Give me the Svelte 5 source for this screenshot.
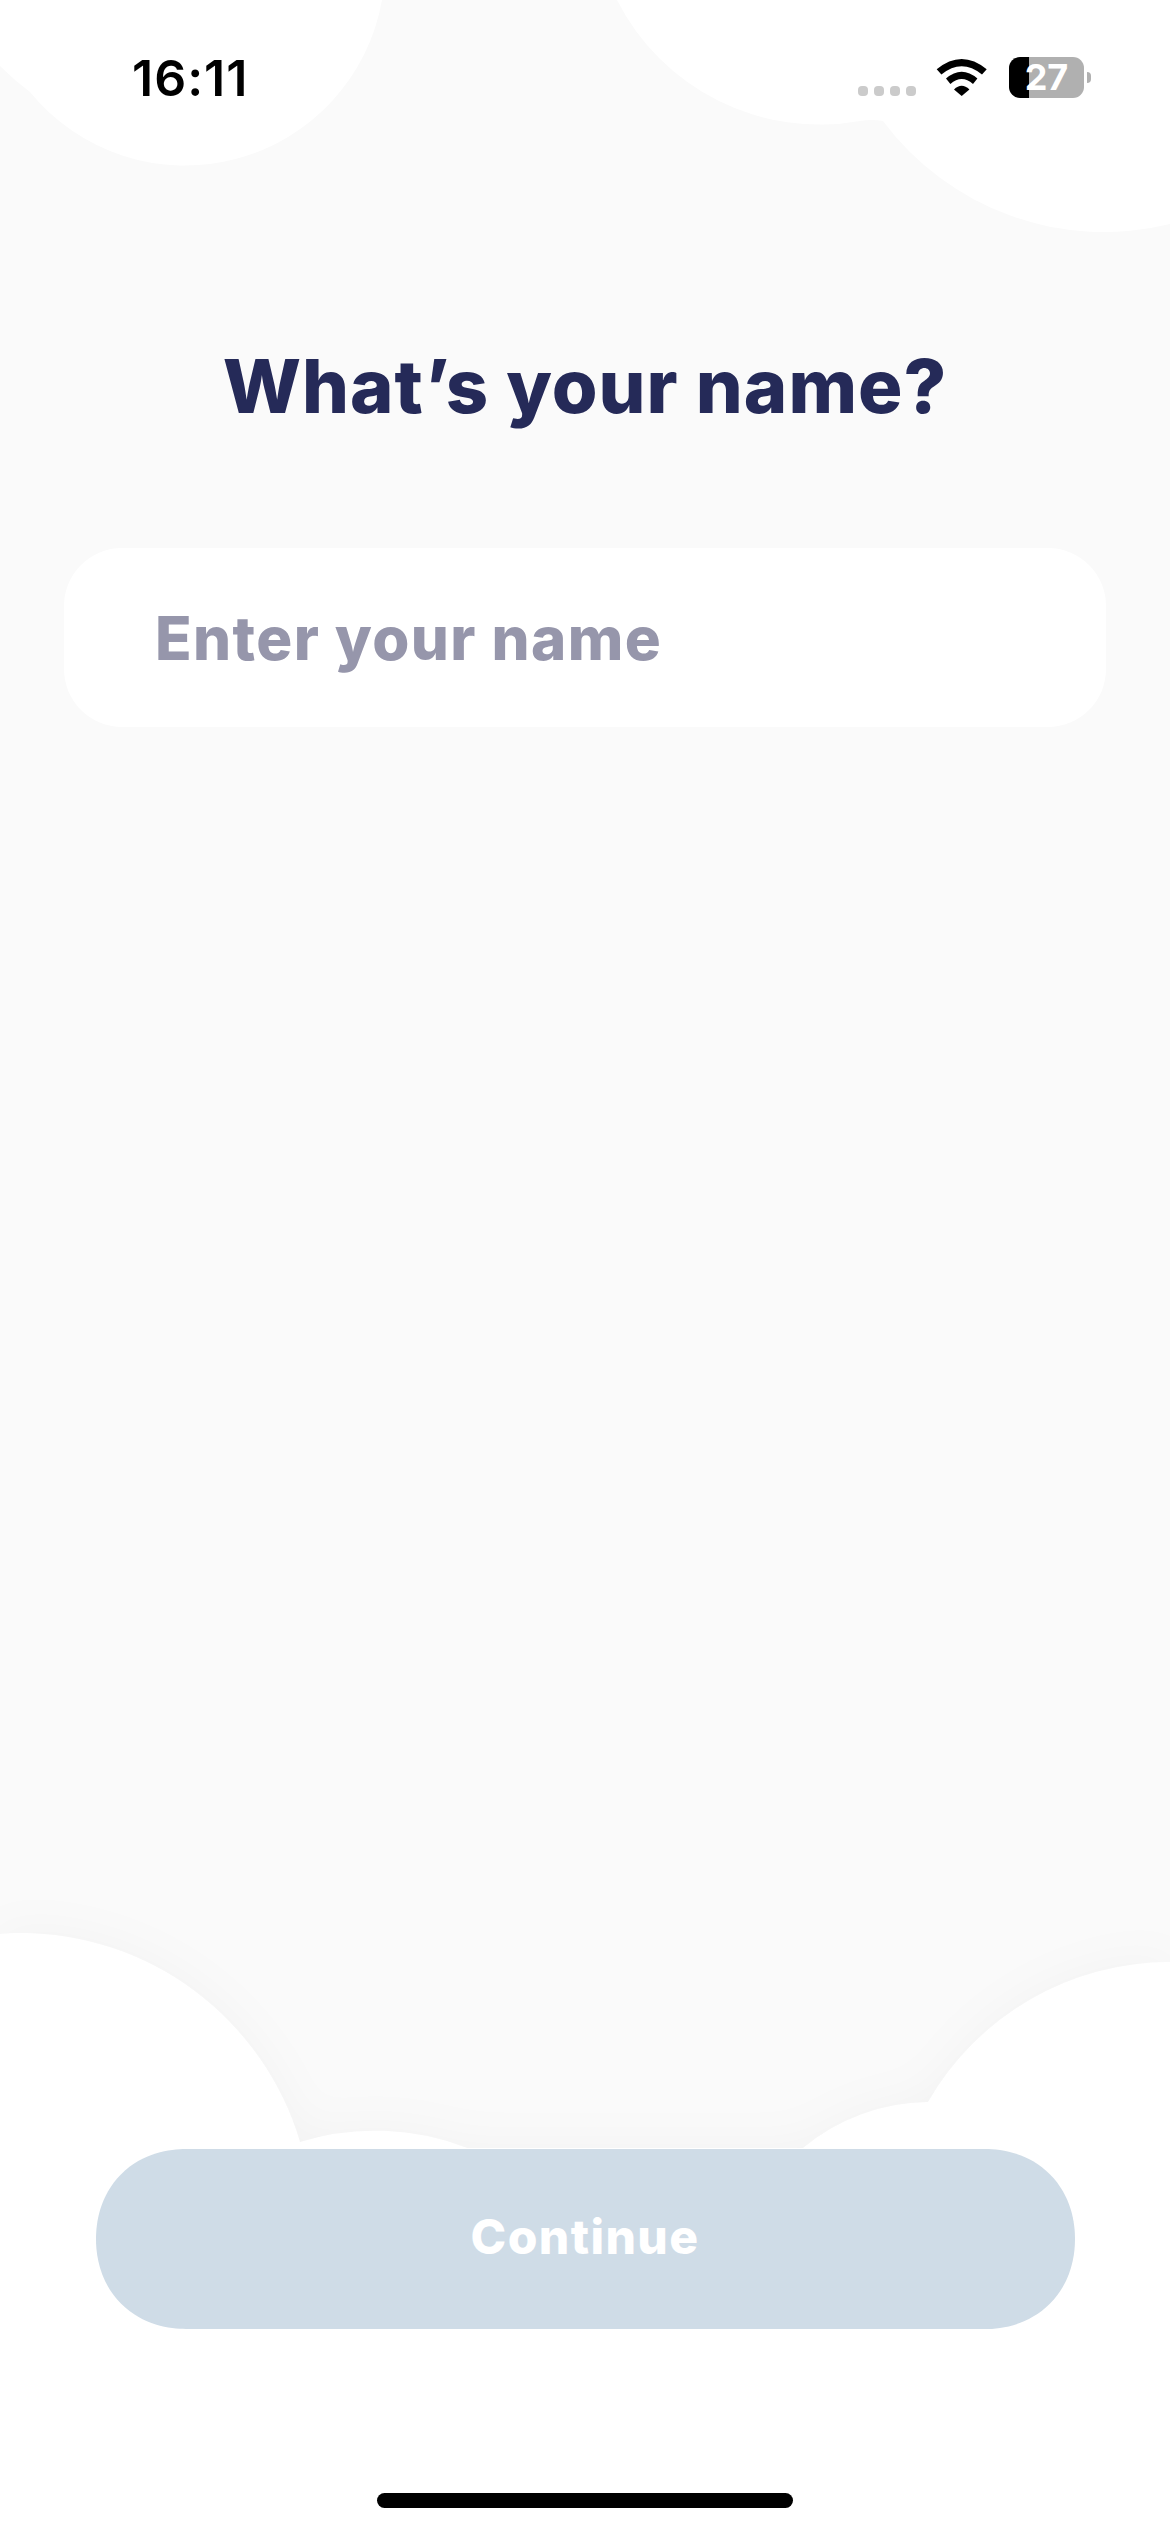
<script lang="ts">
	let name = $state('');
	const dots = [0, 1, 2, 3];
</script>

<div class="screen">
	<svg class="clouds" viewBox="0 0 1170 2532" aria-hidden="true">
		<path d="M382 0 A200 200 0 0 1 30 92 Q14 80 0 66 L0 0 Z" />
		<path d="M617 0 A227 227 0 0 0 860 121 Q872 119 883 121 A275.5 275.5 0 0 0 1170 224 L1170 0 Z" />
		<path
			class="bottom"
			d="M0 1934 Q10 1933 20 1933 A292 292 0 0 1 300 2142 A254 254 0 0 1 467 2148 L803 2148 A198 198 0 0 1 928 2102 A279 279 0 0 1 1170 1962 L1170 2532 L0 2532 Z"
		/>
	</svg>

	<div class="status">
		<span class="time">16:11</span>
		<div class="status__right">
			<div class="signal">
				{#each dots as d (d)}
					<span class="signal__dot"></span>
				{/each}
			</div>
			<svg class="wifi" viewBox="0 0 51 37" aria-hidden="true">
				<path d="M0.7 10.3 Q25.7 -10.3 50.7 10.3 L46 15.5 Q25.7 -1 5.4 15.5 Z" />
				<path d="M10 19.5 Q25.7 6 41.4 19.5 L37 25 Q25.7 15 14.4 25 Z" />
				<path d="M18 30.5 Q25.7 23 33.4 30.5 L25.7 37 Z" />
			</svg>
			<div class="battery">
				<div class="battery__body">27</div>
				<span class="battery__nub"></span>
			</div>
		</div>
	</div>

	<h1 class="title">What’s your name?</h1>

	<input class="name-input" type="text" placeholder="Enter your name" bind:value={name} />

	<button type="button" class="continue" disabled={!name}>Continue</button>

	<div class="home-bar"></div>
</div>

<style>
	:global(body) {
		background: #fff;
	}

	.screen {
		position: relative;
		width: 1170px;
		height: 2532px;
		overflow: hidden;
		background: #fafafa;
		display: flex;
		flex-direction: column;
		align-items: center;
		font-family: Inter, 'Liberation Sans', sans-serif;
	}

	.clouds {
		position: absolute;
		inset: 0;
		width: 1170px;
		height: 2532px;
		fill: #fff;
	}

	.bottom {
		filter: drop-shadow(0 0 24px rgba(0, 0, 0, 0.03));
	}

	.status {
		position: relative;
		width: 100%;
		box-sizing: border-box;
		height: 100px;
		padding: 54px 79px 0 132px;
		display: flex;
		justify-content: space-between;
		align-items: flex-start;
	}

	.time {
		font-size: 50px;
		line-height: 49px;
		font-weight: 600;
		letter-spacing: 1px;
		color: #000;
	}

	.status__right {
		display: flex;
		align-items: flex-end;
		margin-top: 3px;
		height: 41px;
	}

	.signal {
		display: flex;
		gap: 6px;
		margin-bottom: 2px;
	}

	.signal__dot {
		width: 10px;
		height: 10px;
		border-radius: 4px;
		background: #cbcbcb;
	}

	.wifi {
		width: 51px;
		height: 37px;
		margin: 0 22px 2px 20px;
		fill: #000;
	}

	.battery {
		display: flex;
		align-items: center;
		gap: 3px;
	}

	.battery__body {
		width: 75px;
		height: 41px;
		border-radius: 11px;
		background: linear-gradient(90deg, #000 20px, #b0b0b0 20px);
		text-align: center;
		font-size: 36px;
		line-height: 41px;
		font-weight: 700;
		color: #fff;
	}

	.battery__nub {
		width: 4px;
		height: 11px;
		border-radius: 0 6px 6px 0;
		background: #b0b0b0;
	}

	.title {
		position: relative;
		margin: 251px 0 0;
		font-size: 74px;
		line-height: 70px;
		font-weight: 800;
		letter-spacing: 1px;
		color: #252a58;
		white-space: nowrap;
	}

	.name-input {
		position: relative;
		box-sizing: border-box;
		width: 1042px;
		height: 179px;
		margin-top: 127px;
		padding: 0 91px;
		border: none;
		outline: none;
		border-radius: 58px;
		background: #fff;
		font: inherit;
		font-size: 60px;
		font-weight: 800;
		letter-spacing: 1.4px;
		color: #252a58;
	}

	.name-input::placeholder {
		color: #9696ab;
		opacity: 1;
	}

	.continue {
		position: relative;
		width: 979px;
		height: 180px;
		margin-top: auto;
		padding: 0 0 5px;
		border: none;
		border-radius: 90px;
		corner-shape: superellipse(1.08);
		background: #cfdce7;
		font: inherit;
		font-size: 48px;
		font-weight: 800;
		letter-spacing: 1.4px;
		color: #fff;
	}

	.home-bar {
		position: relative;
		width: 416px;
		height: 15px;
		margin: 164px 0 24px;
		border-radius: 8px;
		background: #000;
	}
</style>
